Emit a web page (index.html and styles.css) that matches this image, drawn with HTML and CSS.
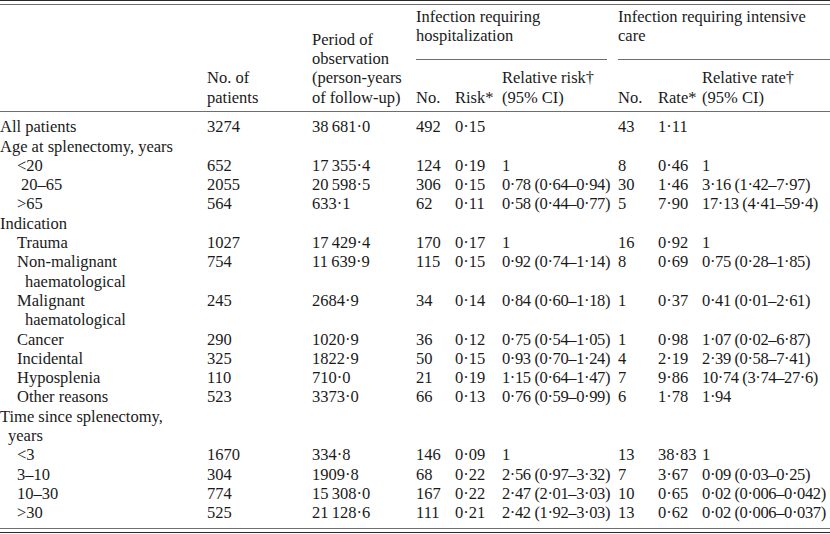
FILE: index.html
```html
<!DOCTYPE html>
<html>
<head>
<meta charset="utf-8">
<link rel="stylesheet" href="styles.css">
</head>
<body>
<div class="page">
  <div class="rule rule-dark"></div>
  <div class="rule rule-light rule-top2"></div>
  <table class="data">
    <colgroup>
      <col class="c-label"><col class="c-pat"><col class="c-period">
      <col class="c-no1"><col class="c-risk"><col class="c-rr">
      <col class="c-no2"><col class="c-rate"><col class="c-rrate">
    </colgroup>
    <thead>
      <tr class="head-a">
        <th rowspan="2" class="hbottom"></th>
        <th rowspan="2" class="hbottom">No. of<br>patients</th>
        <th rowspan="2" class="hbottom">Period of<br>observation<br>(person-years<br>of follow-up)</th>
        <th colspan="3" class="grp-cell"><div class="grp grp-first">Infection requiring<br>hospitalization</div></th>
        <th colspan="3" class="grp-cell"><div class="grp">Infection requiring intensive<br>care</div></th>
      </tr>
      <tr class="head-b">
        <th class="hbottom">No.</th>
        <th class="hbottom">Risk*</th>
        <th class="hbottom">Relative risk†<br>(95% CI)</th>
        <th class="hbottom">No.</th>
        <th class="hbottom">Rate*</th>
        <th class="hbottom">Relative rate†<br>(95% CI)</th>
      </tr>
    </thead>
    <tbody>
      <tr class="first"><td>All patients</td><td>3274</td><td>38&#8201;681·0</td><td>492</td><td>0·15</td><td></td><td>43</td><td>1·11</td><td></td></tr>
      <tr><td>Age at splenectomy, years</td><td></td><td></td><td></td><td></td><td></td><td></td><td></td><td></td></tr>
      <tr><td class="ind">&lt;20</td><td>652</td><td>17&#8201;355·4</td><td>124</td><td>0·19</td><td>1</td><td>8</td><td>0·46</td><td>1</td></tr>
      <tr><td class="ind ind-x">20–65</td><td>2055</td><td>20&#8201;598·5</td><td>306</td><td>0·15</td><td>0·78 (0·64–0·94)</td><td>30</td><td>1·46</td><td>3·16 (1·42–7·97)</td></tr>
      <tr><td class="ind">&gt;65</td><td>564</td><td>633·1</td><td>62</td><td>0·11</td><td>0·58 (0·44–0·77)</td><td>5</td><td>7·90</td><td>17·13 (4·41–59·4)</td></tr>
      <tr><td>Indication</td><td></td><td></td><td></td><td></td><td></td><td></td><td></td><td></td></tr>
      <tr><td class="ind">Trauma</td><td>1027</td><td>17&#8201;429·4</td><td>170</td><td>0·17</td><td>1</td><td>16</td><td>0·92</td><td>1</td></tr>
      <tr><td class="ind hang">Non-malignant<br>haematological</td><td>754</td><td>11&#8201;639·9</td><td>115</td><td>0·15</td><td>0·92 (0·74–1·14)</td><td>8</td><td>0·69</td><td>0·75 (0·28–1·85)</td></tr>
      <tr><td class="ind hang">Malignant<br>haematological</td><td>245</td><td>2684·9</td><td>34</td><td>0·14</td><td>0·84 (0·60–1·18)</td><td>1</td><td>0·37</td><td>0·41 (0·01–2·61)</td></tr>
      <tr><td class="ind">Cancer</td><td>290</td><td>1020·9</td><td>36</td><td>0·12</td><td>0·75 (0·54–1·05)</td><td>1</td><td>0·98</td><td>1·07 (0·02–6·87)</td></tr>
      <tr><td class="ind">Incidental</td><td>325</td><td>1822·9</td><td>50</td><td>0·15</td><td>0·93 (0·70–1·24)</td><td>4</td><td>2·19</td><td>2·39 (0·58–7·41)</td></tr>
      <tr><td class="ind">Hyposplenia</td><td>110</td><td>710·0</td><td>21</td><td>0·19</td><td>1·15 (0·64–1·47)</td><td>7</td><td>9·86</td><td>10·74 (3·74–27·6)</td></tr>
      <tr><td class="ind">Other reasons</td><td>523</td><td>3373·0</td><td>66</td><td>0·13</td><td>0·76 (0·59–0·99)</td><td>6</td><td>1·78</td><td>1·94</td></tr>
      <tr><td class="hang-top">Time since splenectomy,<br>years</td><td></td><td></td><td></td><td></td><td></td><td></td><td></td><td></td></tr>
      <tr><td class="ind">&lt;3</td><td>1670</td><td>334·8</td><td>146</td><td>0·09</td><td>1</td><td>13</td><td>38·83</td><td>1</td></tr>
      <tr><td class="ind">3–10</td><td>304</td><td>1909·8</td><td>68</td><td>0·22</td><td>2·56 (0·97–3·32)</td><td>7</td><td>3·67</td><td>0·09 (0·03–0·25)</td></tr>
      <tr><td class="ind">10–30</td><td>774</td><td>15&#8201;308·0</td><td>167</td><td>0·22</td><td>2·47 (2·01–3·03)</td><td>10</td><td>0·65</td><td>0·02 (0·006–0·042)</td></tr>
      <tr class="last"><td class="ind">&gt;30</td><td>525</td><td>21&#8201;128·6</td><td>111</td><td>0·21</td><td>2·42 (1·92–3·03)</td><td>13</td><td>0·62</td><td>0·02 (0·006–0·037)</td></tr>
    </tbody>
  </table>
  <div class="rule rule-light"></div>
  <div class="rule rule-dark rule-bot2"></div>
</div>
</body>
</html>
```

FILE: styles.css
```css
html, body {
  margin: 0;
  padding: 0;
  background: #ffffff;
}

.page {
  width: 830px;
  font-family: "Liberation Serif", "Times New Roman", serif;
  font-size: 16.5px;
  line-height: 19.3px;
  color: #1a1a1a;
}

.rule {
  height: 1px;
  width: 100%;
}

.rule-dark {
  background: #2a2a2a;
}

.rule-light {
  background: #6e6e6e;
}

.rule-top2 {
  margin-top: 3px;
}

.rule-bot2 {
  margin-top: 3px;
}

.data {
  width: 830px;
  table-layout: fixed;
  border-collapse: separate;
  border-spacing: 0;
}

.c-label { width: 207px; }
.c-pat { width: 105px; }
.c-period { width: 104px; }
.c-no1 { width: 39px; }
.c-risk { width: 47px; }
.c-rr { width: 116px; }
.c-no2 { width: 40px; }
.c-rate { width: 44px; }
.c-rrate { width: 128px; }

.data th,
.data td {
  padding: 0;
  text-align: left;
  font-weight: normal;
  vertical-align: top;
  white-space: nowrap;
}

.data tbody td:nth-child(6),
.data tbody td:nth-child(9) {
  letter-spacing: -0.38px;
}

.data th.hbottom {
  vertical-align: bottom;
  padding-bottom: 4px;
  border-bottom: 1px solid #6e6e6e;
}

.head-a .grp-cell {
  padding-top: 1.5px;
}

.grp {
  padding-bottom: 14px;
  border-bottom: 1px solid #6e6e6e;
}

.grp-first {
  margin-right: 11px;
}

.head-b th {
  padding-top: 8.3px;
}

.data tr.first td {
  padding-top: 5.3px;
}

.data tr.last td {
  padding-bottom: 5.4px;
}

.data td.ind {
  padding-left: 17px;
}

.data td.ind-x {
  padding-left: 21px;
}

.data td.hang {
  padding-left: 25px;
  text-indent: -8px;
}

.data td.hang-top {
  padding-left: 8px;
  text-indent: -8px;
}
```
